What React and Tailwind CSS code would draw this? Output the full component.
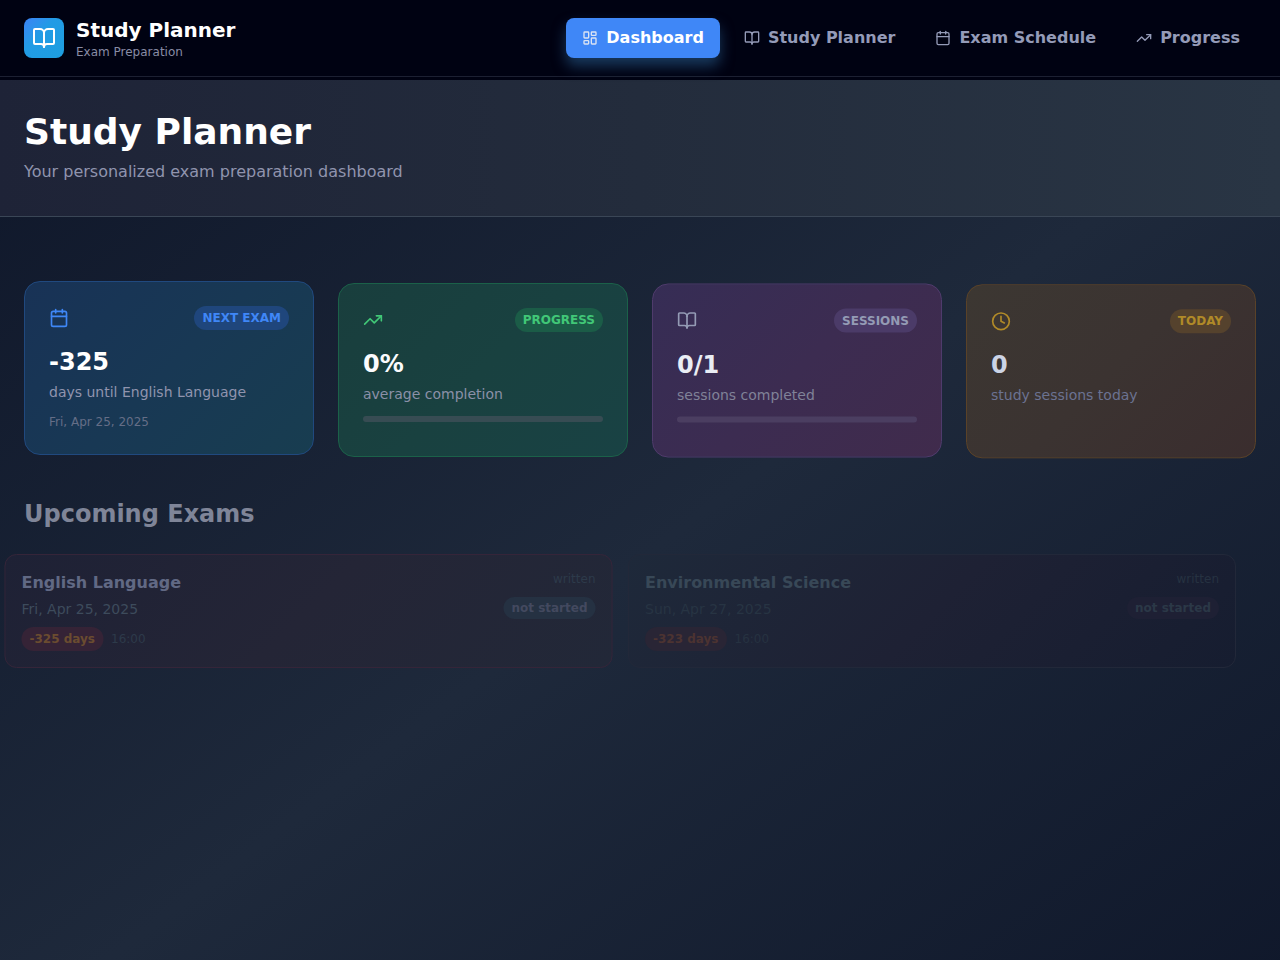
import { BookOpen, Calendar, Clock, LayoutDashboard, TrendingUp } from "lucide-react";

const navItems = [
  { label: "Dashboard", icon: LayoutDashboard, active: true },
  { label: "Study Planner", icon: BookOpen },
  { label: "Exam Schedule", icon: Calendar },
  { label: "Progress", icon: TrendingUp },
];

const stats = [
  {
    label: "NEXT EXAM",
    icon: Calendar,
    value: "-325",
    text: "days until English Language",
    date: "Fri, Apr 25, 2025",
    card: "from-[#183256] via-[#183854] to-[#183d50] border-[#20497f]",
    accent: "text-[#3f87f7]",
    badge: "bg-[#1f467c]",
    valueColor: "text-white",
    textColor: "text-[#9094ae]",
  },
  {
    label: "PROGRESS",
    icon: TrendingUp,
    value: "0%",
    text: "average completion",
    bar: "bg-[#374c53]",
    card: "from-[#193e3d] via-[#194140] to-[#194244] border-[#1b6149] translate-y-[2px]",
    accent: "text-[#41c777]",
    badge: "bg-[#1b5c47]",
    valueColor: "text-[#fbfbfd]",
    textColor: "text-[#8b90a8]",
  },
  {
    label: "SESSIONS",
    icon: BookOpen,
    value: "0/1",
    text: "sessions completed",
    bar: "bg-[#4b3e61]",
    card: "from-[#362d55] via-[#3c2c51] to-[#402b4c] border-[#4f3b6c] translate-y-[2.5px]",
    accent: "text-[#949bb5]",
    badge: "bg-[#4b3b68]",
    valueColor: "text-[#e9edf4]",
    textColor: "text-[#808298]",
  },
  {
    label: "TODAY",
    icon: Clock,
    value: "0",
    text: "study sessions today",
    card: "from-[#3c3732] via-[#3b3331] to-[#3a2d2e] border-[#5a4228] translate-y-[3.3px]",
    accent: "text-[#b08a28]",
    badge: "bg-[#55422d]",
    valueColor: "text-[#ccd4e6]",
    textColor: "text-[#6b7291]",
  },
];

const exams = [
  {
    name: "English Language",
    date: "Fri, Apr 25, 2025",
    days: "-325 days",
    card: "from-[#1e2135] via-[#242536] to-[#222838] border-[#352539] translate-x-[0.5px]",
    title: "text-[#616984]",
    muted: "text-[#3d4b5c]",
    faint: "text-[#2d3a4a]",
    daysBadge: "bg-[#352336] text-[#6b4c30]",
    status: "bg-[#253142] text-[#43495f]",
  },
  {
    name: "Environmental Science",
    date: "Sun, Apr 27, 2025",
    days: "-323 days",
    card: "from-[#1e293a] via-[#1e2134] to-[#161d30] border-[#222839]",
    title: "text-[#384857]",
    muted: "text-[#273443]",
    faint: "text-[#263241]",
    daysBadge: "bg-[#292535] text-[#4c3331]",
    status: "bg-[#1e2034] text-[#2b3847]",
  },
];

const Navbar = () => (
  <header className="bg-[#000212] border-b border-[#1c2032] px-6 py-4 flex items-center justify-between">
    <div className="flex items-center gap-3">
      <div className="w-10 h-10 rounded-lg bg-linear-to-br from-[#3b82f6] via-[#229be5] via-40% to-[#1d9fe0] flex items-center justify-center text-white">
        <BookOpen size={24} />
      </div>
      <div>
        <div className="text-xl font-bold text-white">Study Planner</div>
        <p className="text-xs text-[#888ca5]">Exam Preparation</p>
      </div>
    </div>
    <nav className="flex items-center gap-2">
      {navItems.map(({ label, icon: Icon, active }) => (
        <a
          key={label}
          href="#"
          className={`flex items-center gap-2 px-4 py-2 rounded-lg font-semibold ${
            active ? "bg-[#3f87f7] text-white shadow-[0_8px_14px_0_#2f6fa880]" : "text-[#949bb8]"
          }`}
        >
          <Icon size={16} className={active ? "text-[#dbe4f3]" : ""} />
          {label}
        </a>
      ))}
    </nav>
  </header>
);

const StatCard = ({ stat }) => {
  const Icon = stat.icon;
  return (
    <div className={`h-[174px] rounded-2xl border p-6 bg-linear-135 ${stat.card}`}>
      <div className="flex items-center justify-between mb-4">
        <Icon size={20} className={stat.accent} />
        <span className={`px-2 py-1 rounded-full text-xs font-bold ${stat.badge} ${stat.accent}`}>{stat.label}</span>
      </div>
      <div className={`text-2xl font-bold mb-1 ${stat.valueColor}`}>{stat.value}</div>
      <p className={`text-sm ${stat.textColor}`}>{stat.text}</p>
      {stat.date && <p className="text-xs mt-3 text-[#656e87]">{stat.date}</p>}
      {stat.bar && <div className={`h-1.5 mt-3 rounded-full ${stat.bar}`} />}
    </div>
  );
};

const ExamCard = ({ exam }) => (
  <div className={`flex justify-between rounded-xl border p-4 bg-linear-135 ${exam.card}`}>
    <div>
      <h3 className={`font-semibold mb-1 ${exam.title}`}>{exam.name}</h3>
      <p className={`text-sm ${exam.muted}`}>{exam.date}</p>
      <div className="flex items-center gap-2 mt-2">
        <span className={`px-2 py-1 rounded-full text-xs font-bold ${exam.daysBadge}`}>{exam.days}</span>
        <span className={`text-xs ${exam.faint}`}>16:00</span>
      </div>
    </div>
    <div className="text-right">
      <p className={`text-xs mb-2 ${exam.faint}`}>written</p>
      <span className={`px-2 py-1 rounded-full text-xs font-bold ${exam.status}`}>not started</span>
    </div>
  </div>
);

export default function App() {
  return (
    <div className="h-screen overflow-hidden font-['DejaVu_Sans',sans-serif]">
      <div className="bg-[#000212] pb-[3px]">
        <Navbar />
      </div>

      <div className="h-screen bg-linear-to-br from-[#0f172a] via-[#1e293b] to-[#0f172a]">
        <div className="px-6 py-8 border-b border-[#3a4656] bg-linear-to-r from-[#1e2337] via-[#232c3c] to-[#293544]">
          <h1 className="text-4xl font-bold text-white">Study Planner</h1>
          <p className="mt-2 text-[#9094ae]">Your personalized exam preparation dashboard</p>
        </div>

        <main className="px-6 pt-16">
          <div className="grid grid-cols-4 gap-6">
            {stats.map((stat) => (
              <StatCard key={stat.label} stat={stat} />
            ))}
          </div>

          <h2 className="text-2xl font-bold mt-[43px] mb-6 text-[#7f8598]">Upcoming Exams</h2>
          <div className="grid grid-cols-2 gap-4 -translate-x-5">
            {exams.map((exam) => (
              <ExamCard key={exam.name} exam={exam} />
            ))}
          </div>
        </main>
      </div>
    </div>
  );
}
